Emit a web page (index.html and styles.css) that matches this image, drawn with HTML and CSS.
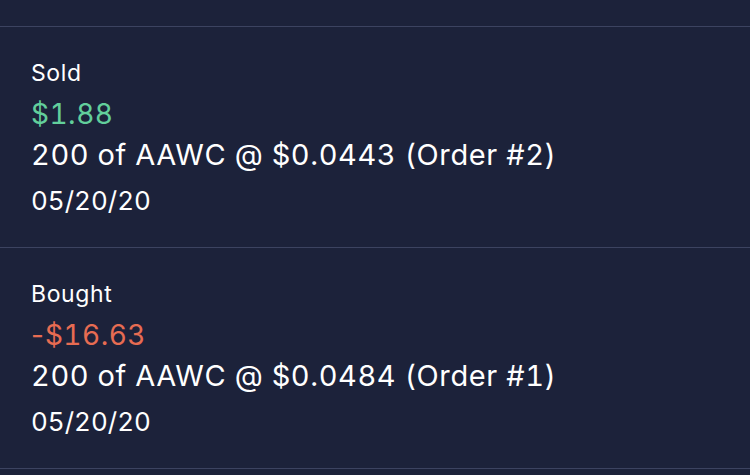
FILE: index.html
```html
<!DOCTYPE html>
<html>
<head>
<meta charset="utf-8">
<link rel="stylesheet" href="styles.css">
</head>
<body>
<div class="list">
  <div class="item">
    <div class="label">Sold</div>
    <div class="amount pos">$1.88</div>
    <div class="desc">200 of AAWC @ $0.0443 (Order #2)</div>
    <div class="date">05/20/20</div>
  </div>
  <div class="item">
    <div class="label">Bought</div>
    <div class="amount neg"><span class="sign">-</span>$16.63</div>
    <div class="desc">200 of AAWC @ $0.0484 (Order #1)</div>
    <div class="date">05/20/20</div>
  </div>
</div>
</body>
</html>
```
FILE: styles.css
```css
html, body {
  margin: 0;
  padding: 0;
  background: #1c223a;
}
body {
  width: 750px;
  height: 475px;
  overflow: hidden;
  font-family: Inter, "Liberation Sans", Arial, sans-serif;
  font-variant-numeric: tabular-nums;
  color: #ffffff;
}
.list {
  padding-top: 26px;
}
.item {
  border-top: 1px solid #3c4360;
  height: 220px;
  padding-left: 31px;
  display: flex;
  flex-direction: column;
}
.item:last-child {
  border-bottom: 1px solid #3c4360;
}
.label {
  font-size: 23px;
  line-height: 28px;
  letter-spacing: 0.6px;
  margin-top: 32px;
}
.amount {
  font-size: 28px;
  line-height: 36px;
  letter-spacing: 0.5px;
  margin-top: 9px;
}
.sign {
  font-variant-numeric: normal;
  letter-spacing: 1px;
}
.pos { color: #62cf9c; }
.neg { color: #e76c52; }
.desc {
  font-size: 29px;
  line-height: 36px;
  letter-spacing: 0.6px;
  margin-top: 5px;
}
.date {
  font-size: 26px;
  line-height: 34px;
  letter-spacing: 0;
  margin-top: 11px;
}
```
